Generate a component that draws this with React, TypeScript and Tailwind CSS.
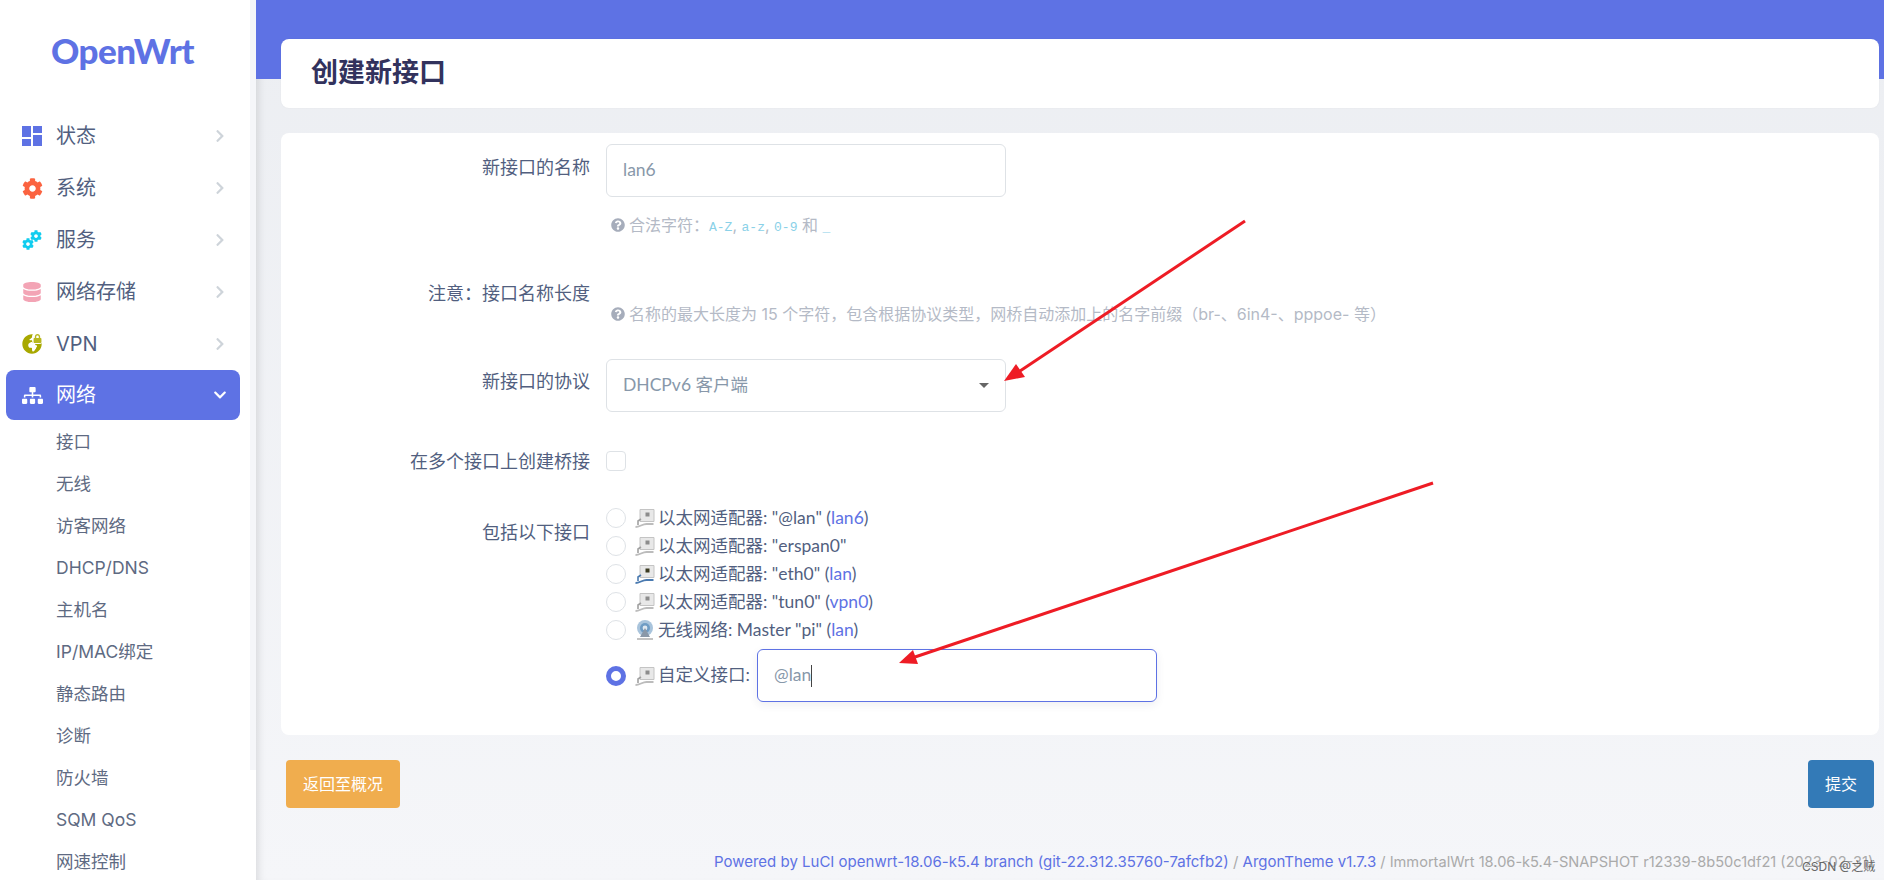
import { FaCog, FaDatabase, FaSitemap, FaChevronRight, FaChevronDown, FaQuestionCircle, FaGlobeAfrica, FaLock } from 'react-icons/fa';

const font = "font-['Inter','Noto_Sans_CJK_SC',sans-serif]";

function Dash() {
  return (
    <svg width="20" height="20" viewBox="0 0 20 20" fill="#5e72e4">
      <rect x="0" y="0" width="9" height="11" />
      <rect x="11" y="0" width="9" height="7" />
      <rect x="0" y="13" width="9" height="7" />
      <rect x="11" y="9" width="9" height="11" />
    </svg>
  );
}

function Services() {
  return (
    <span className="relative block w-5 h-5">
      <FaCog size={12} color="#11cdef" className="absolute right-0 top-0" />
      <FaCog size={12} color="#11cdef" className="absolute left-0 bottom-0" />
    </span>
  );
}

function Vpn() {
  return (
    <span className="relative block w-5 h-5">
      <FaGlobeAfrica size={20} color="#a8a800" className="absolute left-0 bottom-0" />
      <span className="absolute right-[-1px] top-[-1px] flex rounded-sm bg-white p-[1px]">
        <FaLock size={9} color="#b8b820" />
      </span>
    </span>
  );
}

function Adapter({ active }: { active?: boolean }) {
  return (
    <svg width="20" height="20" viewBox="0 0 20 20" className="shrink-0">
      <path d="M5 1.5h14v12H5z" fill="#e8e8e8" stroke="#c4c4c4" />
      <rect x="10.5" y="4.5" width="4" height="4" fill={active ? '#3a3a20' : '#8c8c8c'} />
      <path d="M6 11l-3 2v4" fill="none" stroke={active ? '#4a7ab0' : '#a0a0a0'} strokeWidth="1.6" />
      <path d="M0.5 19c4 0 7-3 11-3h7" fill="none" stroke={active ? '#4a7ab0' : '#bcbcbc'} strokeWidth="1.8" />
    </svg>
  );
}

function Wifi() {
  return (
    <svg width="20" height="20" viewBox="0 0 20 20" className="shrink-0">
      <circle cx="10" cy="8" r="8" fill="#a9c4dc" />
      <circle cx="10" cy="8" r="5" fill="#6f9cc4" />
      <circle cx="10" cy="8" r="2.4" fill="#dfe8f0" />
      <path d="M10 8l-5 9h10z" fill="#8a98a8" />
      <path d="M2 19h16" stroke="#b5b5b5" strokeWidth="1.6" />
    </svg>
  );
}

function Radio() {
  return <span className="shrink-0 w-5 h-5 rounded-full border border-[#dee2e6] bg-white" />;
}

function Hint({ children }: { children: React.ReactNode }) {
  return (
    <div className="flex items-center h-6 pl-[5px] font-['Inter','Noto_Sans_CJK_SC',sans-serif] text-[16px] text-[#b4bac6] whitespace-nowrap">
      <FaQuestionCircle size={14} color="#a6adbb" className="mr-[4px]" />
      <span>{children}</span>
    </div>
  );
}

function Code({ children }: { children: React.ReactNode }) {
  return <code className="font-['Liberation_Mono',monospace] text-[13px] text-[#8ad1e8]">{children}</code>;
}

const mainNav = [
  { label: '状态', icon: <Dash /> },
  { label: '系统', icon: <FaCog size={21} color="#fb6340" /> },
  { label: '服务', icon: <Services /> },
  { label: '网络存储', icon: <FaDatabase size={20} color="#f3a4b5" /> },
  { label: 'VPN', icon: <Vpn /> },
];

const subNav = ['接口', '无线', '访客网络', 'DHCP/DNS', '主机名', 'IP/MAC绑定', '静态路由', '诊断', '防火墙', 'SQM QoS', '网速控制'];

const ports = [
  { text: '以太网适配器: "@lan"', net: 'lan6' },
  { text: '以太网适配器: "erspan0"' },
  { text: '以太网适配器: "eth0"', net: 'lan', active: true },
  { text: '以太网适配器: "tun0"', net: 'vpn0' },
  { text: '无线网络: Master "pi"', net: 'lan', wifi: true },
];

export default function App() {
  return (
    <div className={`${font} relative flex w-[1884px] h-[880px] overflow-hidden bg-gradient-to-b from-[#eceef2] to-[#f5f6f9] text-[#525f7f]`}>
      <aside className="flex w-[256px] shrink-0 bg-white">
        <div className="w-[250px]">
          <div className="h-[110px] flex justify-center pt-[25px] pr-[5px]">
            <span className="font-['Lato',sans-serif] font-black text-[35px] leading-[50px] tracking-[-0.5px] text-[#5e72e4]">OpenWrt</span>
          </div>
          <nav>
            {mainNav.map((item) => (
              <div key={item.label} className="flex items-center h-[52px] pl-[22px] pr-[23px] text-[20px]">
                <span className="w-[34px] flex">{item.icon}</span>
                <span className="flex-1">{item.label}</span>
                <FaChevronRight size={14} color="#ced4da" />
              </div>
            ))}
            <div className="flex items-center h-[50px] ml-[6px] mr-[10px] pl-[16px] pr-[13px] rounded-[8px] bg-[#5e72e4] text-white text-[20px]">
              <span className="w-[34px] flex"><FaSitemap size={21} /></span>
              <span className="flex-1">网络</span>
              <FaChevronDown size={14} />
            </div>
            <ul className="mt-[1px]">
              {subNav.map((item) => (
                <li key={item} className="h-[42px] pl-[56px] flex items-center text-[17.5px] text-[#5e6a82]">{item}</li>
              ))}
            </ul>
          </nav>
        </div>
        <div className="w-[6px] h-[770px] bg-[#f5f6f9]" />
      </aside>

      <main className="flex-1 relative min-w-0 shadow-[inset_8px_0_8px_-6px_rgba(0,0,0,0.12)]">
        <div className="h-[79px] bg-[#5e72e4] -mb-[40px]" />
        <div className="relative ml-[25px] mr-[5px] h-[69px] rounded-[8px] bg-white flex items-center pl-[30px] shadow-[0_0_2px_rgba(0,0,0,0.05)]">
          <h1 className="text-[27px] font-bold text-[#32325d]">创建新接口</h1>
        </div>

        <div className="ml-[25px] mr-[5px] mt-[25px] rounded-[8px] bg-white pt-[11px] pb-[33px] text-[17.5px] font-['Lato','Noto_Sans_CJK_SC',sans-serif]">
          <div className="flex">
            <label className="w-[309px] pt-[11px] h-[35px] leading-6 text-right text-[18px]">新接口的名称</label>
            <div className="ml-[16px]">
              <div className="w-[400px] h-[53px] flex items-center pl-4 rounded-[6px] border border-[#dee2e6] text-[#8898aa]">lan6</div>
              <div className="mt-4">
                <Hint>
                  合法字符：<Code>A-Z</Code>, <Code>a-z</Code>, <Code>0-9</Code> 和 <Code>_</Code>
                </Hint>
              </div>
            </div>
          </div>

          <div className="flex mt-[44px]">
            <label className="w-[309px] leading-6 text-right text-[18px]">注意：接口名称长度</label>
            <div className="ml-[16px] pt-[21px]">
              <Hint>名称的最大长度为 15 个字符，包含根据协议类型，网桥自动添加上的名字前缀（br-、6in4-、pppoe- 等）</Hint>
            </div>
          </div>

          <div className="flex mt-[33px]">
            <label className="w-[309px] pt-[10px] leading-6 text-right text-[18px]">新接口的协议</label>
            <div className="ml-[16px] w-[400px] h-[53px] flex items-center justify-between pl-4 pr-[16px] rounded-[6px] border border-[#dee2e6] text-[#8898aa]">
              <span>DHCPv6 客户端</span>
              <span className="w-0 h-0 border-x-[5px] border-x-transparent border-t-[5px] border-t-[#666]" />
            </div>
          </div>

          <div className="flex items-center mt-[39px] h-5">
            <label className="w-[309px] leading-6 text-right text-[18px]">在多个接口上创建桥接</label>
            <span className="ml-[16px] w-5 h-5 rounded-[4px] border border-[#dee2e6]" />
          </div>

          <div className="flex mt-[33px]">
            <label className="w-[309px] pt-[16px] leading-6 text-right text-[18px]">包括以下接口</label>
            <div className="ml-[16px]">
              {ports.map((p) => (
                <div key={p.text} className="flex items-center h-7 whitespace-nowrap">
                  <Radio />
                  <span className="ml-[9px] mr-[3px]">{p.wifi ? <Wifi /> : <Adapter active={p.active} />}</span>
                  <span>
                    {p.text}
                    {p.net && (
                      <>
                        {' ('}<span className="text-[#5e72e4]">{p.net}</span>{')'}
                      </>
                    )}
                  </span>
                </div>
              ))}
              <div className="flex items-center mt-[5px] whitespace-nowrap">
                <span className="shrink-0 w-5 h-5 rounded-full border-[5px] border-[#5e72e4] bg-white" />
                <span className="ml-[9px] mr-[3px]"><Adapter /></span>
                <span className="w-[94px]">自定义接口:</span>
                <div className="ml-[5px] w-[400px] h-[53px] flex items-center pl-4 rounded-[6px] border border-[#5e72e4] text-[#8898aa] shadow-[0_3px_9px_rgba(50,50,93,0.08)]">
                  @lan<span className="w-px h-[22px] bg-[#444]" />
                </div>
              </div>
            </div>
          </div>
        </div>

        <div className="flex justify-between items-start ml-[30px] mr-[10px] mt-[25px]">
          <button className="w-[114px] h-[48px] rounded-[4px] bg-[#f0ad4e] text-white text-[16px]">返回至概况</button>
          <button className="w-[66px] h-[48px] rounded-[4px] bg-[#337ab7] text-white text-[16px]">提交</button>
        </div>

        <footer className="mt-[44px] ml-[458px] whitespace-nowrap text-[15px] leading-5 text-[#aaa]">
          <span className="text-[#5e72e4]">Powered by LuCI openwrt-18.06-k5.4 branch (git-22.312.35760-7afcfb2)</span>
          {' / '}
          <span className="text-[#5e72e4]">ArgonTheme v1.7.3</span>
          <span className="text-[14.6px]">{' / ImmortalWrt 18.06-k5.4-SNAPSHOT r12339-8b50c1df21 (2023-02-31)'}</span>
        </footer>
      </main>

      <span className="absolute left-[1802px] top-[859px] text-[12px] leading-4 text-[#666] whitespace-nowrap">CSDN @之贼</span>

      <svg className="absolute inset-0 pointer-events-none" width="1884" height="880" viewBox="0 0 1884 880">
        <path d="M1245 221L1020 371" stroke="#ee1c25" strokeWidth="3" fill="none" />
        <path d="M1004 381l12-17 9 13z" fill="#ee1c25" />
        <path d="M1433 483L915 657" stroke="#ee1c25" strokeWidth="3" fill="none" />
        <path d="M899 663l14-13 5 14z" fill="#ee1c25" />
      </svg>
    </div>
  );
}
